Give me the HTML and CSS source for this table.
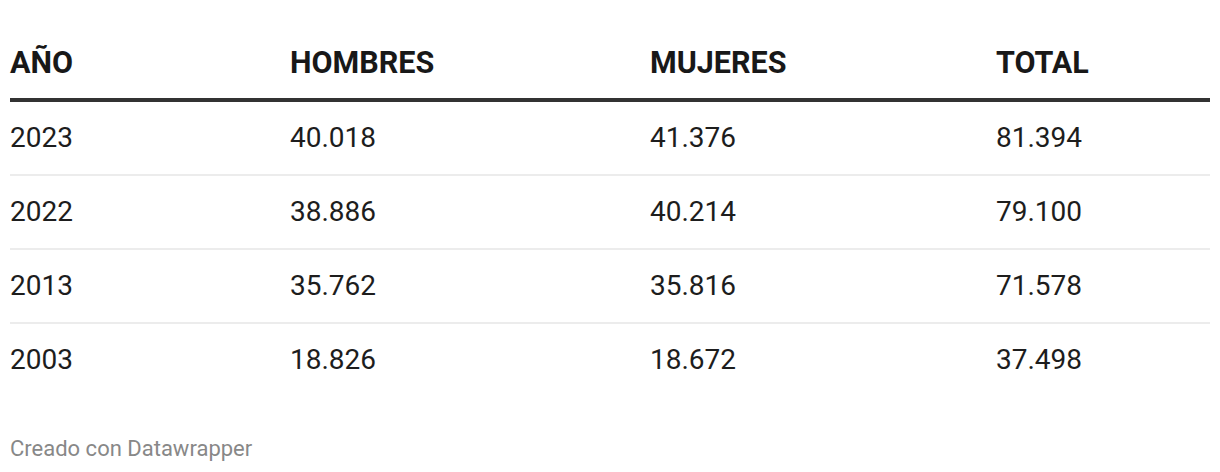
FILE: index.html
```html
<!DOCTYPE html>
<html lang="es">
<head>
<meta charset="utf-8">
<title>Tabla</title>
<link rel="stylesheet" href="styles.css">
</head>
<body>
<div class="chart">
  <div class="table">
    <div class="row head">
      <div class="cell">AÑO</div>
      <div class="cell">HOMBRES</div>
      <div class="cell">MUJERES</div>
      <div class="cell">TOTAL</div>
    </div>
    <div class="row">
      <div class="cell">2023</div>
      <div class="cell">40.018</div>
      <div class="cell">41.376</div>
      <div class="cell">81.394</div>
    </div>
    <div class="row">
      <div class="cell">2022</div>
      <div class="cell">38.886</div>
      <div class="cell">40.214</div>
      <div class="cell">79.100</div>
    </div>
    <div class="row">
      <div class="cell">2013</div>
      <div class="cell">35.762</div>
      <div class="cell">35.816</div>
      <div class="cell">71.578</div>
    </div>
    <div class="row last">
      <div class="cell">2003</div>
      <div class="cell">18.826</div>
      <div class="cell">18.672</div>
      <div class="cell">37.498</div>
    </div>
  </div>
  <div class="footer">Creado con Datawrapper</div>
</div>
</body>
</html>
```
FILE: styles.css
```css
html, body {
  margin: 0;
  padding: 0;
  background: #ffffff;
}
body {
  font-family: Roboto, "Liberation Sans", sans-serif;
  color: #1d1d1d;
}
.chart {
  padding: 0 10px;
}
.table {
  padding-top: 46px;
}
.row {
  display: grid;
  grid-template-columns: 280px 360px 346px 1fr;
  font-size: 28px;
  line-height: 34px;
  padding: 19px 0;
  border-bottom: 2px solid #ececec;
}
.row.head {
  padding: 0 0 18px 0;
  font-size: 30.5px;
  font-weight: 700;
  color: #181818;
  border-bottom: 4px solid #333333;
}
.row.last {
  border-bottom: none;
}
.footer {
  margin-top: 40px;
  font-size: 22px;
  line-height: 26px;
  color: #888888;
}
```
